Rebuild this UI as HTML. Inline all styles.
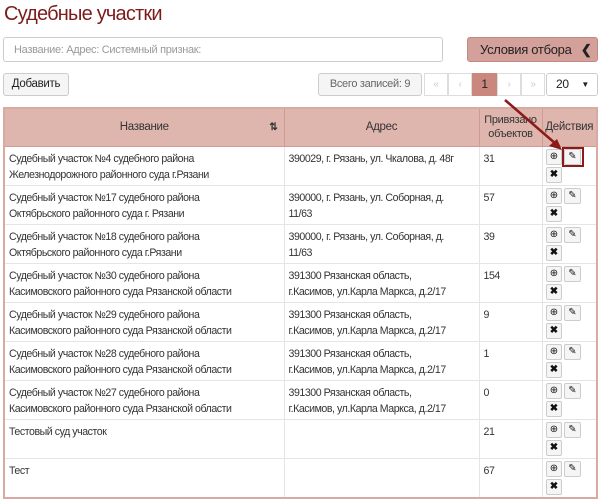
<!DOCTYPE html>
<html><head><meta charset="utf-8"><style>
*{box-sizing:border-box;margin:0;padding:0}
body{width:600px;height:500px;background:#fff;font-family:"Liberation Sans",Arial,sans-serif;font-size:11px;letter-spacing:-0.3px;color:#333;position:relative;overflow:hidden}
.a{position:absolute}
h1{position:absolute;left:4px;top:3px;font-size:20px;letter-spacing:-0.8px;font-weight:normal;color:#7b1c1c}
.inp{left:3px;top:37px;width:440px;height:25px;border:1px solid #ccc;border-radius:3px;color:#999;font-size:11px;padding:6px 10px}
.btn{border:1px solid #ccc;border-radius:3px;background:#f5f5f5;text-align:center}
.pg{top:73px;height:23px;border:1px solid #ddd;background:#fff;color:#ccc;text-align:center;line-height:21px;font-size:10px}
table{position:absolute;left:3px;top:107px;width:595px;border-collapse:collapse;border:2px solid #d9aaa3;table-layout:fixed}
th{background:#dfb6ae;font-weight:normal;border:1px solid #cf9b93;height:38px;font-size:11.5px;line-height:14px}
td{border:1px solid #e5e5e5;height:39px;vertical-align:top;padding:4px 4px 0;line-height:16px;font-size:10.6px;letter-spacing:-0.45px;white-space:nowrap}
td div{height:34px;overflow:hidden}
.ib{position:absolute;width:16px;height:16px;border:1px solid #ccc;border-radius:2px;background:#f5f5f5;font-size:10px;line-height:14px;text-align:center;color:#111;letter-spacing:0}
</style></head><body>
<h1>Судебные участки</h1>
<div class="a inp">Название: Адрес: Системный признак:</div>
<div class="a" style="left:467px;top:37px;width:131px;height:25px;background:#d3a09a;border:1px solid #c08a84;border-radius:3px;font-size:13px;line-height:23px;padding-left:12px;color:#222">Условия отбора <b style="margin-left:6px">&#10094;</b></div>
<div class="a btn" style="left:3px;top:73px;width:66px;height:23px;line-height:21px;font-size:11.5px;color:#222">Добавить</div>
<div class="a btn" style="left:318px;top:73px;width:104px;height:23px;line-height:21px;color:#666;font-size:11px">Всего записей: 9</div>
<div class="a pg" style="left:424px;width:24px">«</div>
<div class="a pg" style="left:448px;width:24px">‹</div>
<div class="a pg" style="left:472px;width:25px;background:#c9877e;border-color:#c9877e;color:#222;font-size:12px">1</div>
<div class="a pg" style="left:497px;width:24px">›</div>
<div class="a pg" style="left:521px;width:24px">»</div>
<div class="a" style="left:546px;top:73px;width:52px;height:23px;border:1px solid #ccc;border-radius:3px;line-height:21px;padding-left:9px;font-size:12px;color:#222">20 <span style="position:absolute;right:8px;top:0;font-size:8px">▼</span></div>
<table>
<colgroup><col style="width:280px"><col style="width:195px"><col style="width:63px"><col></colgroup>
<tr><th style="position:relative">Название<span style="position:absolute;right:6px;top:12px;font-size:10px;font-weight:bold">⇅</span></th><th>Адрес</th><th style="font-size:11px">Привязано объектов</th><th>Действия</th></tr>
<tr><td><div>Судебный участок №4 судебного района<br>Железнодорожного районного суда г.Рязани</div></td><td><div>390029, г. Рязань, ул. Чкалова, д. 48г</div></td><td><div>31</div></td><td></td></tr>
<tr><td><div>Судебный участок №17 судебного района<br>Октябрьского районного суда г. Рязани</div></td><td><div>390000, г. Рязань, ул. Соборная, д.<br>11/63</div></td><td><div>57</div></td><td></td></tr>
<tr><td><div>Судебный участок №18 судебного района<br>Октябрьского районного суда г.Рязани</div></td><td><div>390000, г. Рязань, ул. Соборная, д.<br>11/63</div></td><td><div>39</div></td><td></td></tr>
<tr><td><div>Судебный участок №30 судебного района<br>Касимовского районного суда Рязанской области</div></td><td><div>391300 Рязанская область,<br>г.Касимов, ул.Карла Маркса, д.2/17</div></td><td><div>154</div></td><td></td></tr>
<tr><td><div>Судебный участок №29 судебного района<br>Касимовского районного суда Рязанской области</div></td><td><div>391300 Рязанская область,<br>г.Касимов, ул.Карла Маркса, д.2/17</div></td><td><div>9</div></td><td></td></tr>
<tr><td><div>Судебный участок №28 судебного района<br>Касимовского районного суда Рязанской области</div></td><td><div>391300 Рязанская область,<br>г.Касимов, ул.Карла Маркса, д.2/17</div></td><td><div>1</div></td><td></td></tr>
<tr><td><div>Судебный участок №27 судебного района<br>Касимовского районного суда Рязанской области</div></td><td><div>391300 Рязанская область,<br>г.Касимов, ул.Карла Маркса, д.2/17</div></td><td><div>0</div></td><td></td></tr>
<tr><td><div>Тестовый суд участок</div></td><td></td><td><div>21</div></td><td></td></tr>
<tr><td><div>Тест</div></td><td></td><td><div>67</div></td><td></td></tr>
</table>
<div id="btns"></div>
<script>
var h='';for(var i=0;i<9;i++){var y=149+i*39;
h+='<div class="ib" style="left:546px;top:'+y+'px">⊕</div>';
h+='<div class="ib" style="left:564px;top:'+y+'px;width:17px">✎</div>';
h+='<div class="ib" style="left:546px;top:'+(y+18)+'px;font-weight:bold">✖</div>';}
document.getElementById('btns').innerHTML=h;
</script>
<div class="a" style="left:562px;top:147px;width:22px;height:20px;border:2px solid #8b1a1a"></div>
<svg class="a" style="left:0;top:0" width="600" height="500"><line x1="505" y1="100" x2="556" y2="144" stroke="#8b1a1a" stroke-width="2.5"/><polygon points="562,150 549,146 557,139" fill="#8b1a1a"/></svg>
</body></html>
